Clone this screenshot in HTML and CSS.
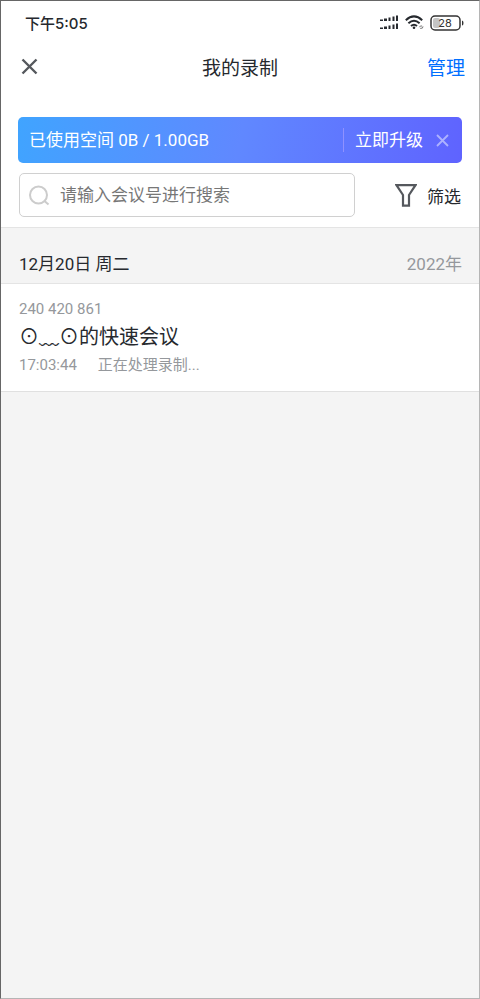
FILE: index.html
```html
<!DOCTYPE html>
<html lang="zh-CN">
<head>
<meta charset="utf-8">
<meta name="viewport" content="width=device-width, initial-scale=1">
<title>我的录制</title>
<link rel="stylesheet" href="styles.css">
</head>
<body>
<div class="screen">
  <div class="status">
    <span class="clock">下午5:05</span>
    <div class="status-icons">
      <svg class="signal" width="19" height="15" viewBox="0 0 19 15" aria-hidden="true">
        <path d="M0 4.500h3v1.500H0zM4 3.500h3v2.500H4zM8.500 2.500h2v3.500h-2zM12.500 1.500h2v4.500h-2zM16 .5h2v5.500h-2zM0 12.500h3v1.500H0zM4 11.500h3v2.500H4zM8.500 10.500h2v3.500h-2zM12.500 9.500h2v4.500h-2zM16 8.500h2v5.500h-2z"/>
      </svg>
      <svg class="wifi" width="19" height="15" viewBox="0 0 19 15" aria-hidden="true">
        <path d="M.8 5.200Q9 -2.400 17.200 5.200M3.400 8.200Q9 3.200 14.600 8.200M6 11Q9 8.400 12 11"/>
        <circle class="solid" cx="9" cy="12.800" r="1.300"/>
        <path class="thin" d="M14.500 12.200q.4-1.800 2.600-1.200M18 11.400q.2 2.400-2.800 2"/>
      </svg>
      <svg class="battery" width="34" height="16" viewBox="0 0 34 16" role="img" aria-label="电量 28%">
        <rect class="charge" x="3" y="3" width="7" height="10" rx="2"/>
        <rect class="case" x="1" y="1" width="29" height="14" rx="4"/>
        <path class="tip" d="M32 5.500q1.500 0 1.500 2.500t-1.500 2.500z"/>
        <text x="15" y="12" text-anchor="middle">28</text>
      </svg>
    </div>
  </div>

  <header class="nav">
    <button class="icon-button" type="button" aria-label="关闭">
      <svg width="17" height="17" viewBox="0 0 17 17"><path d="M1.500 1.500l14 14M15.500 1.500l-14 14"/></svg>
    </button>
    <h1>我的录制</h1>
    <button class="manage" type="button">管理</button>
  </header>

  <main>
    <div class="banner">
      <span class="usage">已使用空间 0B / 1.00GB</span>
      <a class="upgrade" href="#upgrade">立即升级</a>
      <button class="dismiss" type="button" aria-label="关闭提示">
        <svg width="13" height="13" viewBox="0 0 13 13"><path d="M1 1l11 11M12 1L1 12"/></svg>
      </button>
    </div>

    <form class="tools">
      <label class="search">
        <svg width="21" height="21" viewBox="0 0 21 21" aria-hidden="true"><circle cx="9.500" cy="10" r="8.500"/><path d="M15.500 16l4 3.500"/></svg>
        <input type="text" placeholder="请输入会议号进行搜索" aria-label="请输入会议号进行搜索">
      </label>
      <button class="filter" type="button">
        <svg width="22" height="23" viewBox="0 0 22 23" aria-hidden="true"><path d="M1.500 1.200h19L14 11v10.700H8V11z"/></svg>
        <span>筛选</span>
      </button>
    </form>

    <section>
      <div class="day">
        <h2>12月20日 周二</h2>
        <span class="year">2022年</span>
      </div>
      <article class="record">
        <p class="meta">240 420 861</p>
        <h3>⊙﹏⊙的快速会议</h3>
        <p class="meta"><time>17:03:44</time><span>正在处理录制...</span></p>
      </article>
    </section>
  </main>
</div>
</body>
</html>
```
FILE: styles.css
```css
* {
  box-sizing: border-box;
}

body {
  margin: 0;
  font-family: Roboto, "Noto Sans CJK SC", sans-serif;
  color: #26292e;
}

h1, h2, h3, p {
  margin: 0;
  font-weight: 400;
}

button {
  padding: 0;
  border: 0;
  background: none;
  font: inherit;
  color: inherit;
}

svg {
  display: block;
  fill: none;
}

.screen {
  min-height: 100vh;
  border: 1px solid #b5b5b5;
  border-top-color: #666;
  border-left-color: #666;
  background: #f4f4f4;
}

.status {
  display: flex;
  align-items: center;
  justify-content: space-between;
  height: 43px;
  padding: 0 15px 0 24px;
  background: #fff;
}

.clock {
  font-family: Inter, "Noto Sans CJK SC", sans-serif;
  font-size: 15px;
  font-weight: 500;
}

.status-icons {
  display: flex;
  align-items: center;
  gap: 6px;
}

.signal {
  fill: #26292e;
}

.wifi {
  stroke: #26292e;
  stroke-width: 2;
}

.wifi .solid {
  fill: #26292e;
  stroke: none;
}

.wifi .thin {
  stroke: #777;
  stroke-width: 1;
}

.battery .charge {
  fill: #c4c4c4;
}

.battery .case {
  stroke: #333;
  stroke-width: 1.5;
}

.battery .tip {
  fill: #333;
}

.battery text {
  fill: #333;
  font-family: Inter, sans-serif;
  font-size: 11px;
}

.nav {
  display: grid;
  grid-template-columns: 1fr auto 1fr;
  align-items: center;
  height: 44px;
  padding: 0 14px;
  background: #fff;
}

.nav h1 {
  font-size: 19px;
}

.icon-button {
  justify-self: start;
  margin-left: 6px;
  stroke: #55585d;
  stroke-width: 2.4;
}

.manage {
  justify-self: end;
  font-size: 19px;
  color: #006fff;
}

main {
  padding-top: 29px;
  background: #fff;
}

.banner {
  display: flex;
  align-items: center;
  height: 46px;
  margin: 0 17px;
  padding: 0 13px 0 11px;
  border-radius: 5px;
  background: linear-gradient(100deg, #40a4ff, #6088ff 50%, #5f63ff);
  font-size: 17px;
  line-height: 24px;
  color: #fff;
}

.usage {
  flex: 1;
}

.upgrade {
  padding-left: 11px;
  border-left: 1px solid #8f91ff;
  color: inherit;
  text-decoration: none;
}

.dismiss {
  margin-left: 13px;
  stroke: #adb2ff;
  stroke-width: 1.8;
}

.tools {
  display: flex;
  align-items: center;
  justify-content: space-between;
  gap: 40px;
  padding: 10px 18px;
  font-size: 17px;
}

.search {
  display: flex;
  flex: 1;
  align-items: center;
  gap: 10px;
  height: 44px;
  padding: 0 9px;
  border: 1px solid #d0d0d0;
  border-radius: 5px;
}

.search svg {
  flex: none;
  stroke: #ccc;
  stroke-width: 2;
}

.search input {
  flex: 1;
  min-width: 0;
  padding: 0;
  border: 0;
  outline: 0;
  background: none;
  font: inherit;
}

.search input::placeholder {
  color: #777;
}

.filter {
  display: flex;
  align-items: center;
  gap: 10px;
}

.filter svg {
  stroke: #55585d;
  stroke-width: 2.2;
}

.day {
  display: flex;
  align-items: center;
  justify-content: space-between;
  height: 57px;
  padding: 14px 17px 0 18px;
  border: 1px solid #e4e4e4;
  border-width: 1px 0;
  background: #f4f4f4;
  font-size: 17px;
}

.day h2 {
  font-size: inherit;
}

.year {
  color: #95989c;
}

.record {
  padding: 13px 18px 14px;
  border-bottom: 1px solid #e0e0e0;
}

.record h3 {
  font-size: 20px;
  line-height: 32px;
}

.meta {
  display: flex;
  gap: 21px;
  font-size: 15px;
  line-height: 24px;
  color: #95989c;
}
```
